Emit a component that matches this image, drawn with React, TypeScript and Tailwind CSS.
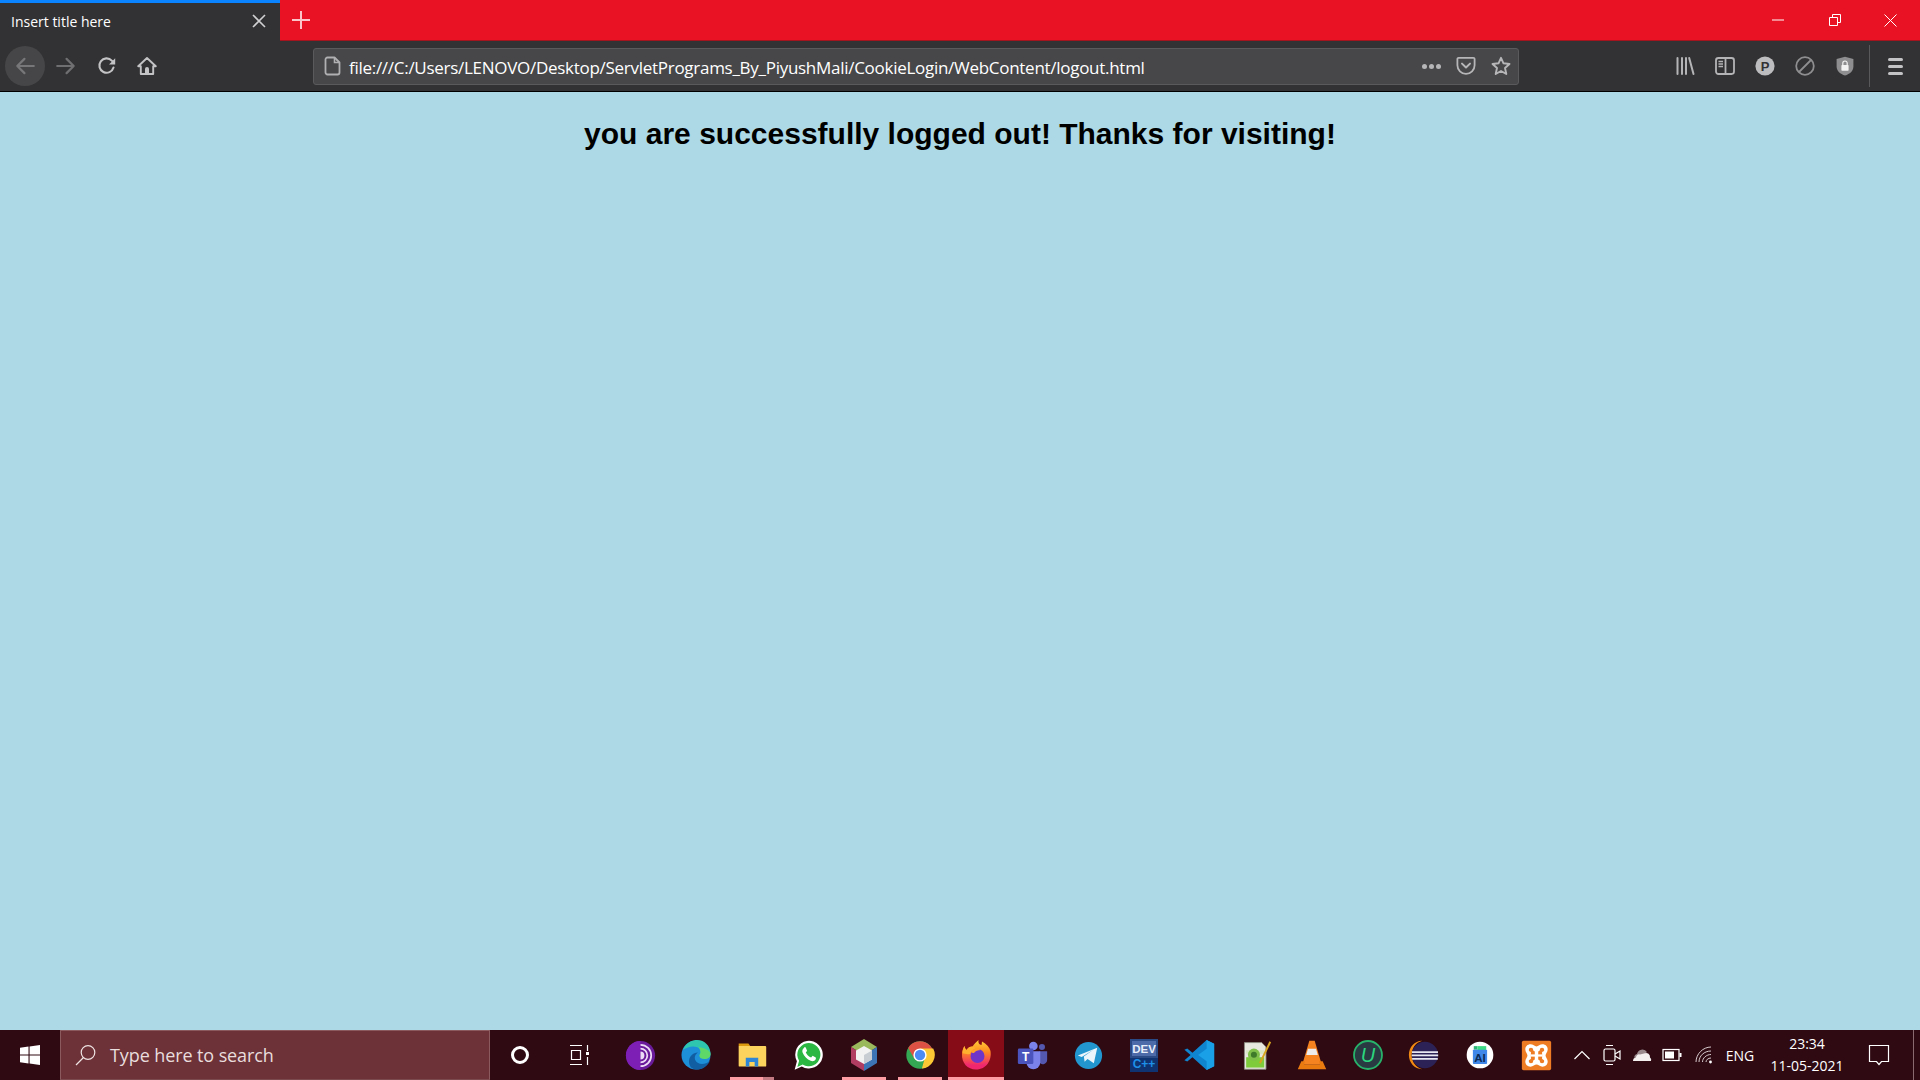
import type { ReactNode } from "react";

const UI_FONT = "font-['Open_Sans',sans-serif]";

/* ── toolbar icons ── */
function Glyph({ children, size = 20, vb = 20, className = "" }: { children: ReactNode; size?: number; vb?: number; className?: string }) {
  return (
    <svg width={size} height={size} viewBox={`0 0 ${vb} ${vb}`} fill="none" className={className}>
      {children}
    </svg>
  );
}

const IconBack = () => (
  <Glyph size={22}>
    <path d="M18 10H3M9.5 3.5 3 10l6.5 6.5" stroke="#77777a" strokeWidth="2" strokeLinecap="round" strokeLinejoin="round" />
  </Glyph>
);
const IconForward = () => (
  <Glyph size={22}>
    <path d="M2 10h15M10.5 3.5 17 10l-6.5 6.5" stroke="#6f6f72" strokeWidth="2" strokeLinecap="round" strokeLinejoin="round" />
  </Glyph>
);
const IconReload = () => (
  <Glyph>
    <path d="M16.5 11.5A7.2 7.2 0 1 1 14.8 4.6L17 7" stroke="#c3c3c5" strokeWidth="2.1" strokeLinecap="round" />
    <path d="M18.2 2.2v6.2H12z" fill="#c3c3c5" />
  </Glyph>
);
const IconHome = () => (
  <Glyph>
    <path d="M10 2 1.2 10.2h2.6V18h12.4v-7.8h2.6z" stroke="#c3c3c5" strokeWidth="1.9" strokeLinejoin="round" />
    <path d="M8 18v-5a2 2 0 0 1 4 0v5z" fill="#c3c3c5" />
  </Glyph>
);
const IconPage = () => (
  <Glyph>
    <path d="M4.500 1.500h7l5 5v10a2 2 0 0 1-2 2h-10a2 2 0 0 1-2-2v-13a2 2 0 0 1 2-2z" stroke="#b0b0b2" strokeWidth="1.800" strokeLinejoin="round" />
    <path d="M11.500 1.500v5h5" stroke="#b0b0b2" strokeWidth="1.600" />
  </Glyph>
);
const IconPocket = () => (
  <Glyph>
    <path d="M2.600 1.800h14.800a1.200 1.200 0 0 1 1.200 1.200v6.200a8.600 8.600 0 0 1-17.200 0V3a1.200 1.200 0 0 1 1.200-1.200z" stroke="#b6b6b8" strokeWidth="1.800" />
    <path d="m6 7.600 4 3.800 4-3.800" stroke="#b6b6b8" strokeWidth="2" strokeLinecap="round" strokeLinejoin="round" />
  </Glyph>
);
const IconStar = () => (
  <Glyph>
    <path d="m10 1.800 2.500 5.500 6 .7-4.500 4 1.300 6L10 15l-5.300 3 1.300-6-4.500-4 6-.7z" stroke="#b6b6b8" strokeWidth="1.900" strokeLinejoin="round" />
  </Glyph>
);
const IconLibrary = () => (
  <Glyph>
    <path d="M2.500 2v16M7 2v16M11 2v16M14.200 2l4.300 16" stroke="#b4b4b6" strokeWidth="2" strokeLinecap="round" />
  </Glyph>
);
const IconSidebar = () => (
  <Glyph>
    <rect x="1" y="2" width="18" height="16" rx="2.400" stroke="#b4b4b6" strokeWidth="1.800" />
    <path d="M10.500 2v16" stroke="#b4b4b6" strokeWidth="1.800" />
    <path d="M3.500 5.500h4.500M3.500 8h4.500M3.500 10.500h4.500" stroke="#b4b4b6" strokeWidth="1.400" />
  </Glyph>
);
const IconPBadge = () => (
  <Glyph>
    <circle cx="10" cy="10" r="9.600" fill="#bdbdbf" />
    <text x="10" y="14.600" textAnchor="middle" fontSize="13" fontWeight="700" fill="#323234" fontFamily="'Liberation Sans',sans-serif">
      P
    </text>
  </Glyph>
);
const IconBlock = () => (
  <Glyph>
    <circle cx="10" cy="10" r="8.800" stroke="#8e8e90" strokeWidth="1.800" />
    <path d="M16 4 4 16" stroke="#8e8e90" strokeWidth="1.800" />
  </Glyph>
);
const IconShield = () => (
  <Glyph>
    <path d="M10 .8 18.400 3v7.400c0 4.400-3.600 7.600-8.400 9-4.800-1.400-8.400-4.600-8.400-9V3z" fill="#8e8e90" />
    <rect x="6.400" y="9" width="7.200" height="5.800" rx=".7" fill="#f2f2f2" />
    <path d="M7.800 9V7.200a2.200 2.200 0 0 1 4.400 0V9" stroke="#f2f2f2" strokeWidth="1.200" />
  </Glyph>
);

/* ── taskbar app icons ── */
const TorIcon = () => (
  <Glyph size={35} vb={36}>
    <circle cx="18" cy="18" r="15" fill="#6a1b9a" />
    <path d="M3 18a15 15 0 0 1 15-15v30A15 15 0 0 1 3 18z" fill="#7d1fb5" />
    <path d="M18 7a11 11 0 0 1 0 22M18 11a7 7 0 0 1 0 14" stroke="#eddcf5" strokeWidth="1.800" />
    <path d="M18 14a4 4 0 0 1 0 8z" fill="#eddcf5" />
  </Glyph>
);
const EdgeIcon = () => (
  <Glyph size={36} vb={36}>
    <circle cx="18" cy="18" r="14.500" fill="#1d8ed8" />
    <path d="M5 13C8 5 15 3 19 3c8 0 13 6 13.500 13 0 4-3 5.500-6 5.500-3 0-5-1-5-3 0-2 2-3 .5-6C20 8.500 11 8 5 13z" fill="#2fc6b0" />
    <path d="M21 10c5 1 11 3 11.500 7 0 4-3 5-6 5-3 0-5-1-5-3 0-2 2-3 .5-6z" fill="#5fd86a" />
    <path d="M32 24c-3 6-8 8.500-13 8.500-5 0-8-3-8-8 0-5 4-9 9-9-3 2-4 5-2.500 8 2 4 9 5 14.500.5z" fill="#115ea3" />
  </Glyph>
);
const ExplorerIcon = () => (
  <Glyph size={32} vb={36}>
    <path d="M3 5h11l2 3H3z" fill="#dc9a0e" />
    <path d="M3 8h30a1 1 0 0 1 1 1v21a1 1 0 0 1-1 1H4a1 1 0 0 1-1-1z" fill="#fbd35d" />
    <path d="M11 31V21h14v10h-4v-5h-6v5z" fill="#2f86d6" />
  </Glyph>
);
const WhatsAppIcon = () => (
  <Glyph size={32} vb={36}>
    <path d="M3 34.500 5.500 25A15.500 15.500 0 1 1 11 30.800z" fill="#fff" />
    <path d="M6 31.500 8 24.600A13 13 0 1 1 12 28.600z" fill="#2cb742" />
    <path d="M13.500 10c-1.500 1-2.500 3-1.500 5.500 1.500 4 5 7.500 9 9 2.500 1 4.500 0 5.500-1.500.5-1 .5-2 .2-2.300l-3.500-1.800-1.700 2c-2.500-1-5-3.500-6-6l1.500-1.500-1.500-3.800c-.5-.3-1.500-.3-2 0z" fill="#fff" />
  </Glyph>
);
const NetBeansIcon = () => (
  <Glyph size={36} vb={36}>
    <path d="M18 2 31 10 18 18 5 10z" fill="#9ab85c" />
    <path d="M5 10 18 18v16L5 26z" fill="#b13d62" />
    <path d="M31 10 18 18v16l13-8z" fill="#3d74b5" />
    <path d="M18 9l8 4.500v9L18 27l-8-4.500v-9z" fill="#f2f2f2" />
    <path d="M18 18l8-4.500v9L18 27z" fill="#c8cdd4" />
  </Glyph>
);
const ChromeIcon = () => (
  <Glyph size={34} vb={36}>
    <circle cx="18" cy="18" r="14.500" fill="#34a853" />
    <path d="M18 3.500A14.500 14.500 0 0 1 32.500 18H18l-6 4L5.500 10.500A14.500 14.500 0 0 1 18 3.500z" fill="#dd5144" />
    <path d="M18 11h14a14.500 14.500 0 0 1-12 21.300L24 18z" fill="#fcc934" />
    <circle cx="18" cy="18" r="7" fill="#fff" />
    <circle cx="18" cy="18" r="5.500" fill="#4b8bf5" />
  </Glyph>
);
const FirefoxIcon = () => (
  <Glyph size={36} vb={36}>
    <defs>
      <linearGradient id="ff-body" x1="0" y1="0" x2="0" y2="1">
        <stop offset="0" stopColor="#ffd23a" />
        <stop offset="0.4" stopColor="#ff8a1f" />
        <stop offset="0.85" stopColor="#f0276f" />
      </linearGradient>
    </defs>
    <path d="M32.500 14c1.500 9-4 18.500-14.500 18.500C9.500 32.500 3.500 26 4 17c.2-3 1-5.500 2.500-8 .3 2 1 3 2 4 1.500-2.500 3.500-3.500 6-3.500 1.500-2.500 4-4.500 6-6.500-.5 3 .5 4.500 3 5 .3-1 .3-2 .5-3.500 4.500 2.500 7.500 5.500 8.500 9.500z" fill="url(#ff-body)" />
    <path d="M14.500 9.500c-2.500 0-4.500 1-6 3.500-1-1-1.700-2-2-4C5 11.500 4.500 14 4.500 16c2 1 5 1.500 7.500 1 1-3 3-5 6-6-1.500-.5-2.500-1-3.500-1.500z" fill="#ffb02e" />
    <circle cx="19.500" cy="19" r="7" fill="#6f35c9" />
    <path d="M13 14.500c2-3 7-3.500 10-1.500-3 0-6 1-7 3-1.500 0-2.500-.5-3-1.500z" fill="#ffa028" />
  </Glyph>
);
const TeamsIcon = () => (
  <Glyph size={31} vb={36}>
    <circle cx="29" cy="8" r="3.500" fill="#5558af" />
    <circle cx="19" cy="7" r="5" fill="#7b83eb" />
    <path d="M26 13h9v10a5 5 0 0 1-9 3z" fill="#5558af" />
    <path d="M11 13h16v13a8 8 0 0 1-16 0z" fill="#7b83eb" />
    <rect x="1" y="10" width="18" height="18" rx="1.500" fill="#4b53bc" />
    <text x="10" y="24" textAnchor="middle" fontSize="14" fontWeight="700" fill="#fff" fontFamily="'Liberation Sans',sans-serif">
      T
    </text>
  </Glyph>
);
const TelegramIcon = () => (
  <Glyph size={35} vb={36}>
    <circle cx="18" cy="18" r="14" fill="#2196cf" />
    <path d="M7 18 27 10l-3.500 16-6.500-4.500-3 3-.8-5.500L23 12 11 19.500z" fill="#eaf5fb" />
  </Glyph>
);
const DevCppIcon = () => (
  <Glyph size={36} vb={36}>
    <rect x="4" y="2" width="28" height="33" fill="#2a4a86" />
    <rect x="6" y="4" width="24" height="15" fill="#4d6ba8" />
    <rect x="4" y="21" width="28" height="14" fill="#0f3270" />
    <text x="18" y="16" textAnchor="middle" fontSize="11.500" fontWeight="700" fill="#e8eefa" fontFamily="'Liberation Sans',sans-serif">
      DEV
    </text>
    <text x="18" y="31" textAnchor="middle" fontSize="12" fontWeight="700" fill="#1e90e8" fontFamily="'Liberation Sans',sans-serif">
      C++
    </text>
  </Glyph>
);
const VsCodeIcon = () => (
  <Glyph size={34} vb={36}>
    <path d="M25 2 33 6v24l-8 4-15-13.500L4.500 25 1.500 23.500 8 18 1.500 12.500 4.500 11 10 15.500z" fill="#0f84cf" />
    <path d="M25 2 33 6v24l-8 4V24.500L16 18l9-6.500z" fill="#1aa0e6" />
  </Glyph>
);
const NotepadIcon = () => (
  <Glyph size={31} vb={36}>
    <path d="M4 3h20l5 5v26H4z" fill="#e8e8e0" stroke="#8a8a80" />
    <path d="M6 12h21v4H6z" fill="#d8e8c0" />
    <rect x="6" y="20" width="21" height="12" fill="#7ecb3c" />
    <circle cx="15" cy="17" r="7" fill="#7fbf4a" />
    <circle cx="15" cy="17" r="3.500" fill="#3f7a2a" />
    <path d="M22 27 34 2" stroke="#d6a520" strokeWidth="2.200" />
  </Glyph>
);
const VlcIcon = () => (
  <Glyph size={32} vb={36}>
    <path d="M15 2h6l8 27H7z" fill="#f5831f" />
    <path d="M13.500 11h9l2 7h-13z" fill="#ececec" />
    <path d="M6 25h4l-1 4h18l-1-4h4l4 9H2z" fill="#e87a10" />
  </Glyph>
);
const IObitIcon = () => (
  <Glyph size={36} vb={36}>
    <circle cx="18" cy="18" r="14" fill="#293a42" stroke="#27b36a" strokeWidth="1.800" />
    <text x="18" y="25" textAnchor="middle" fontSize="20" fontStyle="italic" fill="#2bd67e" fontFamily="'Liberation Sans',sans-serif">
      U
    </text>
  </Glyph>
);
const EclipseIcon = () => (
  <Glyph size={34} vb={36}>
    <path d="M16 3C8 3 2 10 2 18s6 15 14 15C9 31 5 25 5 18S9 5 16 3z" fill="#f08a14" />
    <circle cx="19" cy="18" r="14" fill="#2c2255" />
    <path d="M5.200 15h27.600M5 18.500h28M5.400 22h27.200" stroke="#e8e8f2" strokeWidth="1.800" />
  </Glyph>
);
const AiStudioIcon = () => (
  <Glyph size={32} vb={36}>
    <circle cx="18" cy="18" r="15" fill="#fff" />
    <path d="M11 8h4v4h-4z" fill="#2fb577" />
    <path d="M15 8h10v5H15z" fill="#3ddc84" />
    <rect x="10" y="12" width="16" height="16" rx="1" fill="#3f87e8" />
    <text x="18" y="26" textAnchor="middle" fontSize="13" fontWeight="700" fill="#0b2a55" fontFamily="'Liberation Sans',sans-serif">
      AI
    </text>
  </Glyph>
);
const XamppIcon = () => (
  <Glyph size={31} vb={36}>
    <rect x="1" y="1" width="34" height="34" rx="2" fill="#ee7c24" />
    <path d="M11 5C14 5 16 7.500 18 7.500 20 7.500 22 5 25 5 28.500 5 31 7.500 31 11 31 14 28.500 16 28.500 18 28.500 20 31 22 31 25 31 28.500 28.500 31 25 31 22 31 20 28.500 18 28.500 16 28.500 14 31 11 31 7.500 31 5 28.500 5 25 5 22 7.500 20 7.500 18 7.500 16 5 14 5 11 5 7.500 7.500 5 11 5z" fill="#fff" />
    <path d="M9 11.500a2.600 2.600 0 0 1 5.200 0c0 1 1 1.500 1.800 1.500v10c-.8 0-1.800.5-1.800 1.500a2.600 2.600 0 0 1-5.200 0c0-1.500 2-2 2.500-2.500v-8C11 13.500 9 13 9 11.500z" fill="#ee7c24" />
    <path d="M27 11.500a2.600 2.600 0 0 0-5.200 0c0 1-1 1.500-1.800 1.500v10c.8 0 1.800.5 1.800 1.500a2.600 2.600 0 0 0 5.200 0c0-1.500-2-2-2.500-2.500v-8c.5-.5 2.500-1 2.500-2.500z" fill="#ee7c24" />
    <rect x="11.500" y="16.700" width="13" height="2.600" fill="#fff" />
  </Glyph>
);

const APPS: { icon: ReactNode; underline?: "full" | "stacked"; active?: boolean }[] = [
  { icon: <TorIcon /> },
  { icon: <EdgeIcon /> },
  { icon: <ExplorerIcon />, underline: "stacked" },
  { icon: <WhatsAppIcon /> },
  { icon: <NetBeansIcon />, underline: "full" },
  { icon: <ChromeIcon />, underline: "full" },
  { icon: <FirefoxIcon />, underline: "full", active: true },
  { icon: <TeamsIcon /> },
  { icon: <TelegramIcon /> },
  { icon: <DevCppIcon /> },
  { icon: <VsCodeIcon /> },
  { icon: <NotepadIcon /> },
  { icon: <VlcIcon /> },
  { icon: <IObitIcon /> },
  { icon: <EclipseIcon /> },
  { icon: <AiStudioIcon /> },
  { icon: <XamppIcon /> },
];

function TaskbarApp({ icon, underline, active }: (typeof APPS)[number]) {
  return (
    <div className={`relative flex h-full w-[56px] items-center justify-center ${active ? "bg-[#860d18]" : ""}`}>
      {icon}
      {underline === "full" && <span className={`absolute bottom-0 h-[3px] bg-[#ff9da5] ${active ? "inset-x-0" : "inset-x-[6px]"}`} />}
      {underline === "stacked" && (
        <>
          <span className="absolute bottom-0 left-[6px] h-[3px] w-[33px] bg-[#ff9da5]" />
          <span className="absolute bottom-0 left-[39px] h-[3px] w-[11px] bg-[#c47a82]" />
        </>
      )}
    </div>
  );
}

function TitleBar() {
  return (
    <div className="flex h-[41px] shrink-0 items-stretch border-b border-b-[#a3141f] bg-[#e81224]">
      <div className="-mb-px flex w-[280px] items-center border-t-[3px] border-t-[#0a84ff] bg-[#323234] pb-[2px] pl-[11px] pr-[14px]">
        <span className={`flex-1 text-[14px] text-white ${UI_FONT}`}>Insert title here</span>
        <Glyph size={14} vb={14}>
          <path d="m1 1 12 12M13 1 1 13" stroke="#d0d0d2" strokeWidth="1.600" />
        </Glyph>
      </div>
      <div className="ml-[12px] flex w-[18px] items-center">
        <Glyph size={18} vb={18}>
          <path d="M9 0v18M0 9h18" stroke="#fbc4c9" strokeWidth="2" />
        </Glyph>
      </div>
      <div className="ml-auto flex items-center">
        <div className="flex w-[57px] justify-center">
          <Glyph size={12} vb={12}>
            <path d="M0 6h12" stroke="#fff" />
          </Glyph>
        </div>
        <div className="flex w-[57px] justify-center">
          <Glyph size={12} vb={12}>
            <path d="M.5 3.500h8v8h-8zM3.500 3.500v-3h8v8h-3" stroke="#fff" />
          </Glyph>
        </div>
        <div className="flex w-[57px] justify-center pr-[2px]">
          <Glyph size={13} vb={13}>
            <path d="m.5.500 12 12M12.500.500l-12 12" stroke="#fff" />
          </Glyph>
        </div>
      </div>
    </div>
  );
}

function NavBar() {
  return (
    <div className="flex h-[51px] shrink-0 items-center border-b border-b-black bg-[#323234]">
      <div className="ml-[5px] flex h-10 w-10 items-center justify-center rounded-full bg-[#464648]">
        <IconBack />
      </div>
      <div className="ml-px flex h-10 w-10 items-center justify-center">
        <IconForward />
      </div>
      <div className="ml-px flex h-10 w-10 items-center justify-center">
        <IconReload />
      </div>
      <div className="flex h-10 w-10 items-center justify-center">
        <IconHome />
      </div>
      <div className="ml-[146px] flex h-[37px] w-[1206px] items-center rounded-[3px] border border-[#5a5a5c] bg-[#474749] pl-[9px] pr-[7px]">
        <IconPage />
        <span className={`ml-[6px] flex-1 pt-[3px] text-[17px] tracking-[-0.28px] text-white ${UI_FONT}`}>
          file:///C:/Users/LENOVO/Desktop/ServletPrograms_By_PiyushMali/CookieLogin/WebContent/logout.html
        </span>
        <div className="mr-[15px] flex gap-[2px]">
          <span className="h-[5px] w-[5px] rounded-full bg-[#b6b6b8]" />
          <span className="h-[5px] w-[5px] rounded-full bg-[#b6b6b8]" />
          <span className="h-[5px] w-[5px] rounded-full bg-[#b6b6b8]" />
        </div>
        <IconPocket />
        <div className="ml-[15px]">
          <IconStar />
        </div>
      </div>
      <div className="ml-[146px] flex items-center">
        {[<IconLibrary key="l" />, <IconSidebar key="s" />, <IconPBadge key="p" />, <IconBlock key="b" />, <IconShield key="h" />].map((el, i) => (
          <div key={i} className="flex w-10 justify-center">
            {el}
          </div>
        ))}
      </div>
      <div className="ml-[4px] h-[42px] w-px bg-[#59595b]" />
      <div className="flex flex-1 flex-col items-center gap-[4px]">
        <span className="h-[3px] w-[15px] rounded-full bg-[#c3c3c5]" />
        <span className="h-[3px] w-[15px] rounded-full bg-[#c3c3c5]" />
        <span className="h-[3px] w-[15px] rounded-full bg-[#c3c3c5]" />
      </div>
    </div>
  );
}

function Taskbar() {
  return (
    <div className="flex h-[50px] shrink-0 items-stretch bg-[#2f0a13]">
      <div className="flex w-[60px] items-center justify-center">
        <Glyph size={20} vb={20}>
          <path d="M0 2.800 8.500 1.600v7.900H0zM9.600 1.400 20 0v9.500H9.600zM0 10.500h8.500v7.900L0 17.200zM9.600 10.500H20V20L9.600 18.600z" fill="#fff" />
        </Glyph>
      </div>
      <div className={`flex w-[430px] items-center border-y border-x border-[#8a5a5e] border-b-[#7a4a4e] bg-[#6c3238] pl-[14px] ${UI_FONT}`}>
        <Glyph size={22} vb={22}>
          <circle cx="13" cy="8.500" r="6.800" stroke="#efe3e3" strokeWidth="1.200" />
          <path d="M8.500 13.500 1 21" stroke="#efe3e3" strokeWidth="1.200" />
        </Glyph>
        <span className="ml-[13px] text-[18px] tracking-[-0.1px] text-[#e9dddd]">Type here to search</span>
      </div>
      <div className="flex w-[60px] items-center justify-center">
        <span className="h-[18px] w-[18px] rounded-full border-[3px] border-white" />
      </div>
      <div className="flex w-[60px] items-center justify-center">
        <Glyph size={22} vb={22}>
          <path d="M1 1.500h12M1 20.500h12M2.500 6.500h9v9h-9zM18.500 1v6M18.500 13v8" stroke="#fff" strokeWidth="1.200" />
          <rect x="17" y="8" width="3" height="3" fill="#fff" />
        </Glyph>
      </div>
      <div className="ml-[2px] flex">
        {APPS.map((app, i) => (
          <TaskbarApp key={i} {...app} />
        ))}
      </div>
      <div className="ml-[3px] flex w-[30px] items-center justify-center">
        <Glyph size={16} vb={16}>
          <path d="m.5 12 7.500-7.500L15.500 12" stroke="#fff" strokeWidth="1.200" />
        </Glyph>
      </div>
      <div className="flex w-[30px] items-center justify-center">
        <Glyph size={22} vb={22}>
          <rect x="3" y="5" width="11" height="12" rx="1.500" stroke="#fff" strokeWidth="1.200" />
          <path d="m14 10 5-3v8l-5-3M5 1.500h7M5 20.500h7" stroke="#fff" strokeWidth="1.200" />
        </Glyph>
      </div>
      <div className="flex w-[29px] items-center justify-center">
        <Glyph size={22} vb={22}>
          <path d="M6 10a5.500 5.500 0 0 1 10-2l-6 6-6.500 0A3 3 0 0 1 6 10z" fill="#9a8a8e" />
          <path d="M2 17a3.500 3.500 0 0 1 3-3.500 3 3 0 0 1 4-3l4-1a4 4 0 0 1 6 4 3 3 0 0 1 1 3.500z" fill="#f5f0f0" />
        </Glyph>
      </div>
      <div className="flex w-[31px] items-center justify-center">
        <Glyph size={20} vb={20}>
          <rect x="1" y="4.500" width="16" height="11" stroke="#fff" strokeWidth="1.200" />
          <rect x="3" y="6.500" width="9" height="7" fill="#fff" />
          <rect x="17.500" y="8" width="2" height="4" fill="#fff" />
        </Glyph>
      </div>
      <div className="flex w-[30px] items-center justify-center pl-[5px]">
        <Glyph size={20} vb={20}>
          <path d="M1 17C1 9 8 2 16 2M4 17c0-6 5-11 12-11M7.500 17c0-4 4-7.500 8.500-7.500M11 17c0-2 2-4 5-4" stroke="#d8ccce" strokeWidth="1" />
          <circle cx="15.500" cy="17" r="1.400" fill="#fff" />
        </Glyph>
      </div>
      <div className={`flex w-[49px] items-center justify-center pr-[3px] text-[14px] text-white ${UI_FONT}`}>ENG</div>
      <div className={`ml-[3px] flex w-[76px] flex-col items-center justify-center gap-[3px] pb-[1px] text-[14px] leading-[19px] text-white ${UI_FONT}`}>
        <span>23:34</span>
        <span>11-05-2021</span>
      </div>
      <div className="ml-[4px] flex w-[58px] items-center justify-center pl-[2px]">
        <Glyph size={22} vb={22}>
          <path d="M1.500 1.500h19v16h-7l-2.500 3-2.500-3h-7z" stroke="#fff" strokeWidth="1.200" />
        </Glyph>
      </div>
      <div className="ml-[6px] w-px bg-[#8a6a6e]" />
    </div>
  );
}

export default function App() {
  return (
    <div className="flex h-screen w-full flex-col overflow-hidden">
      <TitleBar />
      <NavBar />
      <main className="flex-1 bg-[#add8e6] pt-[25px] text-center">
        <h1 className="font-['Liberation_Sans',Arial,sans-serif] text-[30px] font-bold leading-[34px] text-black">
          you are successfully logged out! Thanks for visiting!
        </h1>
      </main>
      <Taskbar />
    </div>
  );
}
